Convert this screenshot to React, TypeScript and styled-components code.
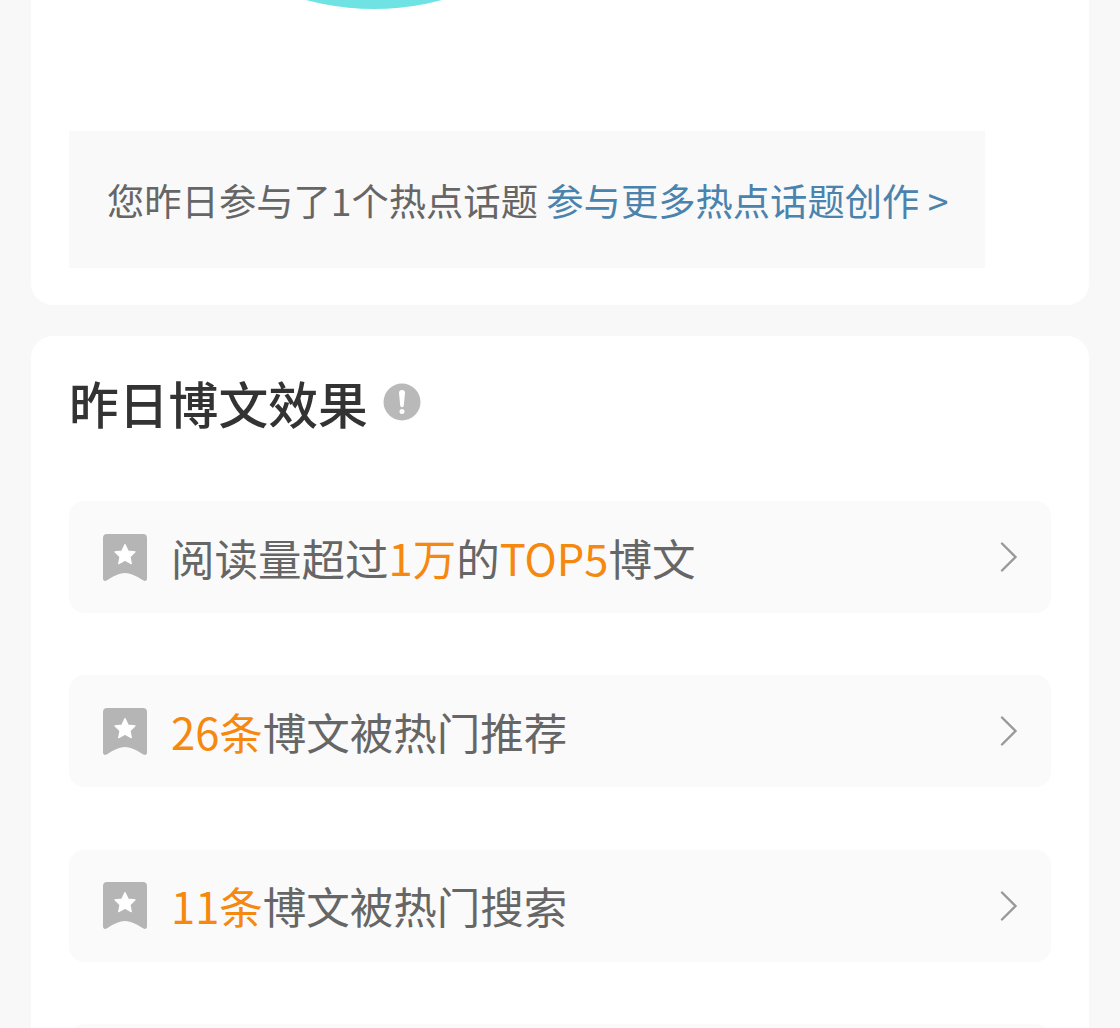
import React from "react";
import styled, { createGlobalStyle } from "styled-components";

const GlobalStyle = createGlobalStyle`
  html, body {
    margin: 0;
    padding: 0;
    height: 1028px;
    overflow: hidden;
    background: #f8f8f8;
    font-family: "Noto Sans CJK SC", "Noto Sans", sans-serif;
  }
`;

const Page = styled.div`
  display: flex;
  flex-direction: column;
  gap: 31px;
  padding: 0 31px;
`;

const Card = styled.section`
  background: #fff;
  border-radius: 0 0 22px 22px;
  padding: 0 38px 37px;
`;

const ResultsCard = styled(Card)`
  border-radius: 22px 22px 0 0;
  padding: 36px 38px 0;
`;

const Chart = styled.svg`
  display: block;
  width: 982px;
  height: 10px;
  margin-bottom: 121px;
`;

const Banner = styled.div`
  width: 916px;
  height: 137px;
  box-sizing: border-box;
  padding-left: 38px;
  display: flex;
  align-items: center;
  background: #f9f9f9;
  font-size: 37.3px;
  color: #666;
  white-space: pre;
`;

const BannerLink = styled.span`
  color: #4a83ad;
`;

const TitleRow = styled.div`
  display: flex;
  align-items: center;
  gap: 15px;
  height: 60px;
  margin-bottom: 69px;
`;

const Title = styled.h2`
  margin: 0;
  font-size: 49.8px;
  line-height: 60px;
  font-weight: 500;
  color: #333;
`;

const RowList = styled.div`
  display: flex;
  flex-direction: column;
  gap: 62.33px;
`;

const Row = styled.div`
  display: flex;
  align-items: center;
  height: 112px;
  padding: 0 33px 0 34px;
  background: #fafafa;
  border-radius: 15px;
`;

const RowText = styled.span`
  flex: 1;
  margin-left: 24px;
  font-size: 43.5px;
  color: #666;
  white-space: pre;
`;

const Accent = styled.span`
  color: #f5880f;
`;

const InfoIcon = () => (
  <svg width="38" height="38" viewBox="0 0 38 38">
    <circle cx="19" cy="19" r="18.5" fill="#b9b9b9" />
    <path d="M16 10a3 3 0 0 1 6 0L20.800 22.500a1.800 1.800 0 0 1-3.600 0z" fill="#fff" />
    <circle cx="19" cy="28.500" r="2.500" fill="#fff" />
  </svg>
);

const BookmarkIcon = () => (
  <svg width="44" height="47" viewBox="0 0 44 47">
    <path
      d="M4 0h36a4 4 0 0 1 4 4v40.500c0 2-1.800 3-3.500 2-6-3.500-12-7.500-18.500-7.500s-12.500 4-18.500 7.500C1.800 47.500 0 46.500 0 44.500V4a4 4 0 0 1 4-4z"
      fill="#b5b5b5"
    />
    <path
      d="M22 10.500l3.100 6.500 7 .9-5.100 4.900 1.300 6.900-6.300-3.400-6.300 3.400 1.300-6.900-5.100-4.900 7-.9z"
      fill="#fff"
      stroke="#fff"
      strokeWidth="1.200"
      strokeLinejoin="round"
    />
  </svg>
);

const ChevronIcon = () => (
  <svg width="18" height="30" viewBox="0 0 18 30">
    <path d="M2 1.500 L15.500 15 L2 28.500" fill="none" stroke="#999" strokeWidth="2.400" strokeLinecap="round" />
  </svg>
);

const rows: React.ReactNode[] = [
  <>阅读量超过<Accent>1万</Accent>的<Accent>TOP5</Accent>博文</>,
  <><Accent>26条</Accent>博文被热门推荐</>,
  <><Accent>11条</Accent>博文被热门搜索</>,
  <></>,
];

const App: React.FC = () => {
  return (
    <>
      <GlobalStyle />
      <Page>
        <Card>
          <Chart viewBox="0 0 982 10">
            {/* bottom edge of the donut, the rest is scrolled away */}
            <circle cx="305" cy="-252" r="261" fill="#6fe3e4" />
          </Chart>
          <Banner>
            您昨日参与了1个热点话题 <BannerLink>参与更多热点话题创作 &gt;</BannerLink>
          </Banner>
        </Card>
        <ResultsCard>
          <TitleRow>
            <Title>昨日博文效果</Title>
            <InfoIcon />
          </TitleRow>
          <RowList>
            {rows.map((content, i) => (
              <Row key={i}>
                <BookmarkIcon />
                <RowText>{content}</RowText>
                <ChevronIcon />
              </Row>
            ))}
          </RowList>
        </ResultsCard>
      </Page>
    </>
  );
};

export default App;
